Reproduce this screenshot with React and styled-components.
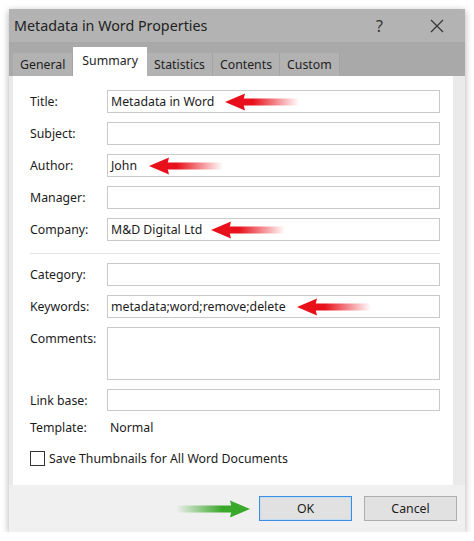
import React from "react";
import styled, { createGlobalStyle } from "styled-components";

const GlobalStyle = createGlobalStyle`
  html, body {
    margin: 0;
    background: #ffffff;
  }
  body {
    font-family: "Noto Sans", "Open Sans", sans-serif;
    color: #1b1b1b;
  }
`;

const TEXT = "12.3px";

const Page = styled.div`
  padding: 9px 0 0 9px;
`;

const Window = styled.div`
  width: 456px;
  display: flex;
  flex-direction: column;
  background: #f0f0f0;
  box-shadow: 0 2px 7px rgba(0, 0, 0, 0.32);
`;

const TitleBar = styled.div`
  height: 33px;
  display: flex;
  align-items: center;
  background: #b3b3b3;
  padding-left: 5px;
`;

const Caption = styled.div`
  flex: 1;
  font-size: 14.3px;
  color: #222;
`;

const TitleButton = styled.div`
  width: 57px;
  height: 33px;
  display: flex;
  align-items: center;
  justify-content: center;
  font-size: 16px;
  color: #333;
`;

const TabStrip = styled.div`
  height: 34px;
  display: flex;
  align-items: flex-end;
  background: #a9a9a9;
  padding-left: 4px;
`;

const Tab = styled.div`
  height: ${(p) => (p.$active ? "26px" : "23px")};
  padding: ${(p) => (p.$active ? "0 9px 3px" : "0 7px")};
  display: flex;
  align-items: center;
  font-size: ${TEXT};
  color: #1e1e1e;
  background: ${(p) => (p.$active ? "#ffffff" : "#b2b2b2")};
  border-right: ${(p) => (p.$active ? "none" : "1px solid #a4a4a4")};
`;

const Body = styled.div`
  padding: 0 12px 0 4px;
  background: #eaeaea;
`;

const Panel = styled.div`
  height: 409px;
  box-sizing: border-box;
  background: #ffffff;
  padding: 14px 13px 0 17px;
  display: flex;
  flex-direction: column;
`;

const Row = styled.div`
  display: grid;
  grid-template-columns: 77px 1fr;
  align-items: ${(p) => (p.$top ? "start" : "center")};
  margin-bottom: ${(p) => p.$gap ?? 9}px;
`;

const Label = styled.div`
  font-size: ${TEXT};
  padding-top: ${(p) => (p.$top ? "3px" : "0")};
`;

const Field = styled.div`
  height: ${(p) => p.$h ?? 23}px;
  box-sizing: border-box;
  border: 1px solid #c9c9c9;
  display: flex;
  align-items: ${(p) => (p.$multi ? "flex-start" : "center")};
  padding-left: 3px;
  font-size: ${TEXT};
  white-space: nowrap;
`;

const Value = styled.div`
  font-size: ${TEXT};
  padding-left: 3px;
`;

const Separator = styled.div`
  height: 1px;
  background: #e4e4e4;
  margin: 12px 0 9px;
`;

const CheckRow = styled.label`
  display: flex;
  align-items: center;
  gap: 4px;
  font-size: ${TEXT};
  margin-top: 14px;
`;

const Box = styled.span`
  width: 15px;
  height: 15px;
  box-sizing: border-box;
  border: 1px solid #333;
  background: #fff;
`;

const Footer = styled.div`
  height: 47px;
  box-sizing: border-box;
  display: flex;
  align-items: center;
  justify-content: flex-end;
  padding: 0 8px 0 0;
  background: #f0f0f0;
`;

const Button = styled.button`
  width: 93px;
  height: 25px;
  margin-left: ${(p) => p.$ml ?? 0}px;
  font-family: inherit;
  font-size: ${TEXT};
  color: #1b1b1b;
  background: #e1e1e1;
  border: 1px solid ${(p) => (p.$default ? "#3d8ee0" : "#adadad")};
  box-shadow: ${(p) => (p.$default ? "inset 0 0 0 1px #c6dcf2" : "none")};
`;

function Arrow({ color, dir = "left", gap = 10, id }) {
  const left = dir === "left";
  return (
    <svg
      width="74"
      height="18"
      viewBox="0 0 74 18"
      style={{ marginLeft: gap, flexShrink: 0 }}
    >
      <defs>
        <linearGradient id={id} x1={left ? "0" : "1"} x2={left ? "1" : "0"}>
          <stop offset="0.2" stopColor={color} stopOpacity="1" />
          <stop offset="1" stopColor={color} stopOpacity="0" />
        </linearGradient>
      </defs>
      {left ? (
        <>
          <rect x="16" y="5.5" width="58" height="7" fill={`url(#${id})`} />
          <polygon points="0,9 20,0.5 18,9 20,17.5" fill={color} />
        </>
      ) : (
        <>
          <rect x="0" y="5.5" width="58" height="7" fill={`url(#${id})`} />
          <polygon points="74,9 54,0.5 56,9 54,17.5" fill={color} />
        </>
      )}
    </svg>
  );
}

const CloseIcon = () => (
  <svg width="14" height="14" viewBox="0 0 14 14">
    <path d="M1 1 L13 13 M13 1 L1 13" stroke="#333" strokeWidth="1.2" />
  </svg>
);

const RED = "#e8101a";

export default function App() {
  return (
    <Page>
      <GlobalStyle />
      <Window>
        <TitleBar>
          <Caption>Metadata in Word Properties</Caption>
          <TitleButton>?</TitleButton>
          <TitleButton>
            <CloseIcon />
          </TitleButton>
        </TitleBar>
        <TabStrip>
          <Tab>General</Tab>
          <Tab $active>Summary</Tab>
          <Tab>Statistics</Tab>
          <Tab>Contents</Tab>
          <Tab>Custom</Tab>
        </TabStrip>
        <Body>
          <Panel>
            <Row>
              <Label>Title:</Label>
              <Field>
                Metadata in Word
                <Arrow color={RED} gap={11} id="a1" />
              </Field>
            </Row>
            <Row>
              <Label>Subject:</Label>
              <Field />
            </Row>
            <Row>
              <Label>Author:</Label>
              <Field>
                John
                <Arrow color={RED} gap={12} id="a2" />
              </Field>
            </Row>
            <Row>
              <Label>Manager:</Label>
              <Field />
            </Row>
            <Row $gap={0}>
              <Label>Company:</Label>
              <Field>
                M&amp;D Digital Ltd
                <Arrow color={RED} gap={9} id="a3" />
              </Field>
            </Row>
            <Separator />
            <Row>
              <Label>Category:</Label>
              <Field />
            </Row>
            <Row>
              <Label>Keywords:</Label>
              <Field>
                metadata;word;remove;delete
                <Arrow color={RED} gap={11} id="a4" />
              </Field>
            </Row>
            <Row $top>
              <Label $top>Comments:</Label>
              <Field $h={53} $multi />
            </Row>
            <Row $gap={8}>
              <Label>Link base:</Label>
              <Field $h={22} />
            </Row>
            <Row $gap={0}>
              <Label>Template:</Label>
              <Value>Normal</Value>
            </Row>
            <CheckRow>
              <Box />
              Save Thumbnails for All Word Documents
            </CheckRow>
          </Panel>
        </Body>
        <Footer>
          <Arrow color="#3aa82a" dir="right" gap={0} id="g1" />
          <Button $default $ml={9}>
            OK
          </Button>
          <Button $ml={12}>Cancel</Button>
        </Footer>
      </Window>
    </Page>
  );
}
